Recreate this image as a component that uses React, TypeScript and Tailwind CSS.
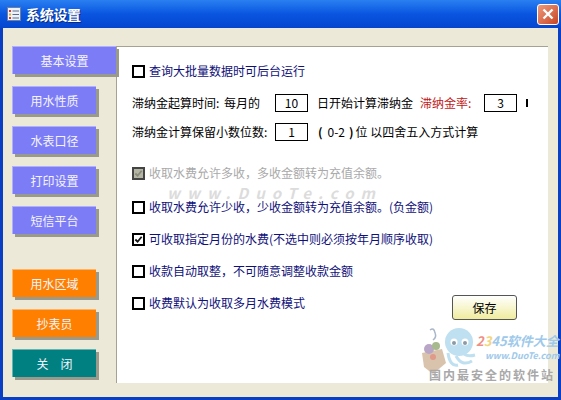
const font = "[font-family:'Noto_Sans_CJK_SC','Liberation_Sans',sans-serif]";

function NavButton({ label, color, wide }: { label: string; color: string; wide?: boolean }) {
  return (
    <div
      className={`flex h-[28px] items-center justify-center border-t border-l border-white/40 text-[12px] text-[#f4f4ff] shadow-[3px_3px_0_#9a9a8c] ${color} ${wide ? "w-[104px]" : "w-[84px]"}`}
    >
      {label}
    </div>
  );
}

function Check({ checked, disabled }: { checked?: boolean; disabled?: boolean }) {
  return (
    <div
      className={`flex h-[13px] w-[13px] shrink-0 items-center justify-center border-2 ${disabled ? "border-[#444] bg-[#b5b5a5]" : "border-black bg-white"}`}
    >
      {(checked || disabled) && (
        <svg viewBox="0 0 10 10" className="h-[9px] w-[9px]">
          <path d="M1.5 5 L4 7.5 L8.5 2" fill="none" stroke={disabled ? "#8a8a7c" : "#111"} strokeWidth="2" />
        </svg>
      )}
    </div>
  );
}

function Option({ text, checked, disabled, className }: { text: string; checked?: boolean; disabled?: boolean; className: string }) {
  return (
    <div className={`flex h-[16px] items-center gap-[4px] text-[12px] leading-none ${className}`}>
      <Check checked={checked} disabled={disabled} />
      <span className={disabled ? "text-[#a9a9a9]" : "text-[#10107a]"}>{text}</span>
    </div>
  );
}

function Field({ value }: { value: string }) {
  return (
    <div className="flex h-[18px] w-[33px] items-center justify-center border border-black bg-white text-[12px]">
      {value}
    </div>
  );
}

function Mascot() {
  return (
    <svg viewBox="0 0 58 50" className="h-[50px] w-[58px] shrink-0">
      <path d="M4 28 L24 24 L28 38 L15 49 L6 42Z" fill="#d9c3ac" />
      <circle cx="11" cy="24" r="5" fill="#b9a6c6" />
      <circle cx="18" cy="21" r="4" fill="#a7b98e" />
      <circle cx="15" cy="32" r="3" fill="#e09a8a" />
      <path d="M12 5 Q16 2 17 8 M17 8 Q19 12 15 15" fill="none" stroke="#a9b7c8" strokeWidth="1.5" />
      <ellipse cx="41" cy="17" rx="14" ry="14" fill="#bfe0f0" />
      <circle cx="36" cy="17" r="3.5" fill="#fff" />
      <circle cx="47" cy="17" r="3.5" fill="#fff" />
      <circle cx="36" cy="18" r="2" fill="#8d9aa5" />
      <circle cx="47" cy="18" r="2" fill="#8d9aa5" />
      <path d="M30 28 Q32 42 40 40 M38 31 Q44 42 54 36 M46 29 Q50 32 57 30" fill="none" stroke="#bfe0f0" strokeWidth="3" />
    </svg>
  );
}

export default function App() {
  return (
    <div className={`flex h-[400px] w-[561px] flex-col overflow-hidden bg-[#0a3fc4] ${font}`}>
      <div className="flex h-[28px] shrink-0 items-center bg-gradient-to-b from-[#2a7ff0] via-[#0a55e0] to-[#0445cf] pl-[7px] pr-[2px]">
        <svg viewBox="0 0 14 14" className="h-[14px] w-[14px]">
          <rect x="0.5" y="0.5" width="13" height="13" fill="#eef2f8" stroke="#6b7fa8" />
          <rect x="2" y="3" width="2" height="2" fill="#d83a2a" />
          <rect x="2" y="6.5" width="2" height="2" fill="#e0b020" />
          <rect x="2" y="10" width="2" height="2" fill="#d83a2a" />
          <path d="M5.5 4H12M5.5 7.5H12M5.5 11H12" stroke="#5a6b8c" />
        </svg>
        <span className="ml-[5px] text-[14px] font-bold tracking-[-0.3px] text-white [text-shadow:1px_1px_0_#0a2a80]">系统设置</span>
        <div className="ml-auto flex h-[21px] w-[22px] items-center justify-center rounded-[3px] border border-white bg-gradient-to-br from-[#eb9a7c] to-[#c8431f]">
          <svg viewBox="0 0 12 12" className="h-[12px] w-[12px]">
            <path d="M1.5 1.5 L10.5 10.5 M10.5 1.5 L1.5 10.5" stroke="#fff" strokeWidth="2.4" />
          </svg>
        </div>
      </div>

      <div className="mx-[3px] mb-[3px] flex min-h-0 flex-1 bg-[#ece9d8] pr-[10px] pb-[14px] pl-[9px] pt-[18px]">
        <div className="relative z-10 flex w-[104px] shrink-0 flex-col">
          <NavButton label="基本设置" color="bg-[#7c7cf6]" wide />
          <div className="mt-[12px] flex flex-col gap-[12px]">
            <NavButton label="用水性质" color="bg-[#7c7cf6]" />
            <NavButton label="水表口径" color="bg-[#7c7cf6]" />
            <NavButton label="打印设置" color="bg-[#7c7cf6]" />
            <NavButton label="短信平台" color="bg-[#7c7cf6]" />
          </div>
          <div className="mt-[35px] flex flex-col gap-[12px]">
            <NavButton label="用水区域" color="bg-[#ff8000]" />
            <NavButton label="抄表员" color="bg-[#ff8000]" />
            <NavButton label="关　闭" color="bg-[#008080]" />
          </div>
        </div>

        <div className="relative flex-1 border-l border-t border-[#a5a294] bg-white pl-[15px] pt-[16px] text-black">
          <div className="pointer-events-none absolute left-[50px] top-[139px] text-[15px] leading-[14px] font-bold italic tracking-[7px] whitespace-nowrap text-[#dcdcdc]">
            www.DuoTe.com
          </div>

          <div className="relative">
            <Option text="查询大批量数据时可后台运行" className="" />

            <div className="mt-[15px] flex h-[18px] items-center text-[12px]">
              <span className="w-[143px]"><span className="mr-[2px]">滞纳金起算时间:</span> 每月的</span>
              <Field value="10" />
              <span className="ml-[9px] w-[103px]">日开始计算滞纳金</span>
              <span className="w-[64px] text-[#c01818]">滞纳金率:</span>
              <Field value="3" />
              <span className="ml-[9px] h-[8px] w-[2px] bg-black" />
            </div>

            <div className="mt-[11px] flex h-[18px] items-center text-[12px]">
              <span className="w-[143px]">滞纳金计算保留小数位数:</span>
              <Field value="1" />
              <span className="ml-[10px] font-bold">(</span>
              <span className="ml-[5px]">0-2</span>
              <span className="ml-[4px] font-bold">)</span>
              <span className="ml-[2px]">位 以四舍五入方式计算</span>
            </div>

            <Option text="收取水费允许多收，多收金额转为充值余额。" disabled className="mt-[24px]" />
            <Option text="收取水费允许少收，少收金额转为充值余额。(负金额)" className="mt-[18px]" />
            <Option text="可收取指定月份的水费(不选中则必须按年月顺序收取)" checked className="mt-[16px]" />
            <Option text="收款自动取整，不可随意调整收款金额" className="mt-[16px]" />
            <div className="mt-[16px] flex items-start justify-between pr-[31px]">
              <Option text="收费默认为收取多月水费模式" className="" />
              <div className="flex h-[25px] w-[65px] items-center justify-center rounded-[3px] border border-[#555] bg-gradient-to-b from-white to-[#f0ec9c] text-[12px]">
                保存
              </div>
            </div>
          </div>

          <div className="pointer-events-none absolute right-[-10px] bottom-0 flex w-[140px] flex-col">
            <div className="flex h-[42px] items-start">
              <Mascot />
              <div className="flex flex-col pt-[9px] whitespace-nowrap">
                <span className="text-[13px] leading-[14px] font-bold italic text-[#9ec9ea]">
                  <span className="text-[#ef8f86]">2</span>
                  <span className="text-[#f2d67e]">3</span>
                  <span>45</span>
                  软件大全
                </span>
                <span className="mt-[3px] ml-[9px] text-[9px] leading-[10px] font-bold italic text-[#9ec9ea]">www.DuoTe.com</span>
              </div>
            </div>
            <span className="ml-[11px] text-[12px] leading-[16px] font-bold tracking-[2px] whitespace-nowrap text-[#a8a8a8]">国内最安全的软件站</span>
          </div>
        </div>
      </div>
    </div>
  );
}
